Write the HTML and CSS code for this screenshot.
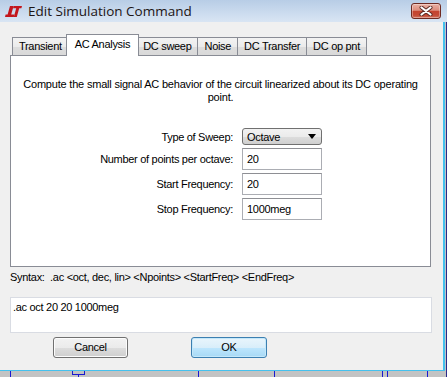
FILE: index.html
```html
<!DOCTYPE html>
<html>
<head>
<meta charset="utf-8">
<link rel="stylesheet" href="styles.css">
</head>
<body>
<div class="screen">
  <div class="dialog">
    <div class="titlebar">
      <svg class="logo" width="17" height="11" viewBox="0 0 17 11">
        <polygon points="5,0 8.6,0 6.2,8.6 9.4,8.6 8.8,11 0,11 0.6,8.6 2.6,8.6" fill="#c3161c"/>
        <polygon points="8.6,0 17,0 16.4,2.2 14.2,2.2 11.8,11 8.8,11 11.2,2.2 8,2.2" fill="#c3161c"/>
      </svg>
      <span class="title">Edit Simulation Command</span>
      <div class="close">
        <svg width="14" height="10" viewBox="0 0 14 10">
          <path d="M2.5 1.5 L11.5 8.5 M11.5 1.5 L2.5 8.5" stroke="#5a2a24" stroke-width="4" stroke-linecap="round"/>
          <path d="M2.5 1.5 L11.5 8.5 M11.5 1.5 L2.5 8.5" stroke="#ffffff" stroke-width="2.2" stroke-linecap="round"/>
        </svg>
      </div>
    </div>
    <div class="body">
      <div class="tabs">
        <div class="tab">Transient</div>
        <div class="tab active">AC Analysis</div>
        <div class="tab">DC sweep</div>
        <div class="tab">Noise</div>
        <div class="tab">DC Transfer</div>
        <div class="tab">DC op pnt</div>
      </div>
      <div class="panel">
        <p class="desc">Compute the small signal AC behavior of the circuit linearized about its DC operating point.</p>
        <div class="form">
          <span class="label">Type of Sweep:</span>
          <div class="select"><span>Octave</span><span class="arrow"></span></div>
          <span class="label">Number of points per octave:</span>
          <div class="input">20</div>
          <span class="label">Start Frequency:</span>
          <div class="input">20</div>
          <span class="label">Stop Frequency:</span>
          <div class="input">1000meg</div>
        </div>
      </div>
      <div class="syntax">Syntax:&nbsp; .ac &lt;oct, dec, lin&gt; &lt;Npoints&gt; &lt;StartFreq&gt; &lt;EndFreq&gt;</div>
      <div class="command">.ac oct 20 20 1000meg</div>
      <div class="buttons">
        <div class="btn cancel">Cancel</div>
        <div class="btn ok">OK</div>
      </div>
    </div>
  </div>
  <div class="wire w1"></div>
  <div class="wire w2"></div>
  <div class="wire w3"></div>
  <div class="wire w4"></div>
  <div class="wire w5"></div>
  <div class="wire w6"></div>
  <div class="wire w7"></div>
  <div class="wirebox"></div>
  <div class="wire wr"></div>
</div>
</body>
</html>
```
FILE: styles.css
```css
* { box-sizing: border-box; }
html, body { margin: 0; padding: 0; }
body {
  font-family: "Liberation Sans", Arial, sans-serif;
  font-size: 11px;
  letter-spacing: -0.3px;
  color: #000;
}
.screen {
  width: 447px;
  height: 377px;
  position: relative;
  overflow: hidden;
  background: #c3c3c3;
}
.dialog {
  width: 445px;
  height: 371px;
  background: #f0f0f0;
  border-right: 2px solid #44c1ee;
  border-bottom: 1px solid #44c1ee;
  display: flex;
  flex-direction: column;
}
.titlebar {
  height: 22px;
  flex: none;
  display: flex;
  align-items: center;
  margin-right: -4px;
  padding-right: 6px;
  background: linear-gradient(#b8cde6, #cfdef0 70%, #d9e5f3);
  padding-left: 5px;
  position: relative;
  z-index: 3;
}
.logo { flex: none; margin-top: 1px; }
.title {
  margin-left: 6px;
  font-family: "Open Sans", "Noto Sans", sans-serif;
  font-size: 13.5px;
  letter-spacing: 0;
  color: #1c1414;
}
.close {
  margin-left: auto;
  width: 30px;
  height: 16px;
  border: 1px solid #6e2a22;
  border-radius: 3px;
  background: linear-gradient(#eab0a3 0%, #dc8d7d 45%, #c4432f 52%, #c44a36 80%, #d1735f 100%);
  display: flex;
  align-items: center;
  justify-content: center;
  box-shadow: inset 0 0 0 1px rgba(255,255,255,0.35);
}
.body {
  flex: 1;
  padding: 12px 0 0 10px;
  display: flex;
  flex-direction: column;
}
.tabs {
  display: flex;
  align-items: flex-end;
  height: 21px;
  margin-left: 2px;
  position: relative;
  z-index: 1;
}
.tab {
  height: 18px;
  padding: 0 6px;
  border: 1px solid #898c95;
  border-bottom: none;
  margin-left: -1px;
  background: linear-gradient(#f3f3f3, #ebebeb 50%, #dddddd 51%, #d9d9d9);
  line-height: 16px;
  white-space: nowrap;
}
.tab:first-child { margin-left: 0; }
.tab.active {
  height: 22px;
  margin: 0 -2px -1px -3px;
  padding: 0 8px;
  background: #fff;
  line-height: 18px;
  position: relative;
  z-index: 2;
}
.panel {
  width: 421px;
  height: 212px;
  flex: none;
  background: #fff;
  border: 1px solid #898c95;
  padding-top: 22px;
}
.desc {
  margin: 0;
  text-align: center;
  line-height: 13px;
  letter-spacing: -0.2px;
  padding: 0 4px;
}
.form {
  margin-top: 24px;
  display: grid;
  grid-template-columns: 222px 80px;
  column-gap: 9px;
  row-gap: 3px;
}
.label {
  text-align: right;
  align-self: center;
  white-space: nowrap;
}
.select {
  height: 17px;
  border: 1px solid #707070;
  border-radius: 3px;
  background: linear-gradient(#f2f2f2, #ebebeb 50%, #dddddd 51%, #cfcfcf);
  display: flex;
  align-items: center;
  justify-content: space-between;
  padding: 0 5px 0 4px;
}
.arrow {
  width: 0;
  height: 0;
  border-left: 4px solid transparent;
  border-right: 4px solid transparent;
  border-top: 5px solid #000;
}
.input {
  height: 22px;
  border: 1px solid #abadb3;
  border-top-color: #8e8f94;
  background: #fff;
  line-height: 20px;
  padding-left: 4px;
}
.syntax {
  margin-top: 3px;
  line-height: 14px;
  white-space: nowrap;
}
.command {
  margin-top: 13px;
  width: 422px;
  height: 36px;
  background: #fff;
  border: 1px solid #d9dce3;
  padding: 3px 2px;
  line-height: 13px;
}
.buttons {
  margin-top: 4px;
  display: flex;
  padding-left: 43px;
  gap: 63px;
}
.btn {
  height: 21px;
  border-radius: 3px;
  text-align: center;
  line-height: 19px;
}
.cancel {
  width: 75px;
  border: 1px solid #707070;
  background: linear-gradient(#f2f2f2, #ebebeb 50%, #dddddd 51%, #cfcfcf);
  box-shadow: inset 0 0 0 1px #fcfcfc;
}
.ok {
  width: 76px;
  border: 1px solid #3c7fb1;
  background: linear-gradient(#e9f5fc, #d9eefa 50%, #bee6fd 51%, #a7d9f5);
  box-shadow: inset 0 0 0 1px #c4e8fa;
}
.wire {
  position: absolute;
  background: #1a1ad0;
  width: 1px;
  top: 371px;
  height: 6px;
}
.w1 { left: 10px; }
.w2 { left: 78px; top: 375px; }
.w3 { left: 198px; }
.w4 { left: 274px; }
.w5 { left: 382px; }
.w6 { left: 387px; }
.w7 { left: 427px; }
.wirebox {
  position: absolute;
  left: 72px;
  top: 371px;
  width: 13px;
  height: 4px;
  border: 1px solid #1a1ad0;
  border-top: none;
}
.wr {
  left: 446px;
  top: 22px;
  height: 355px;
  background: #2a2a8a;
}
```
